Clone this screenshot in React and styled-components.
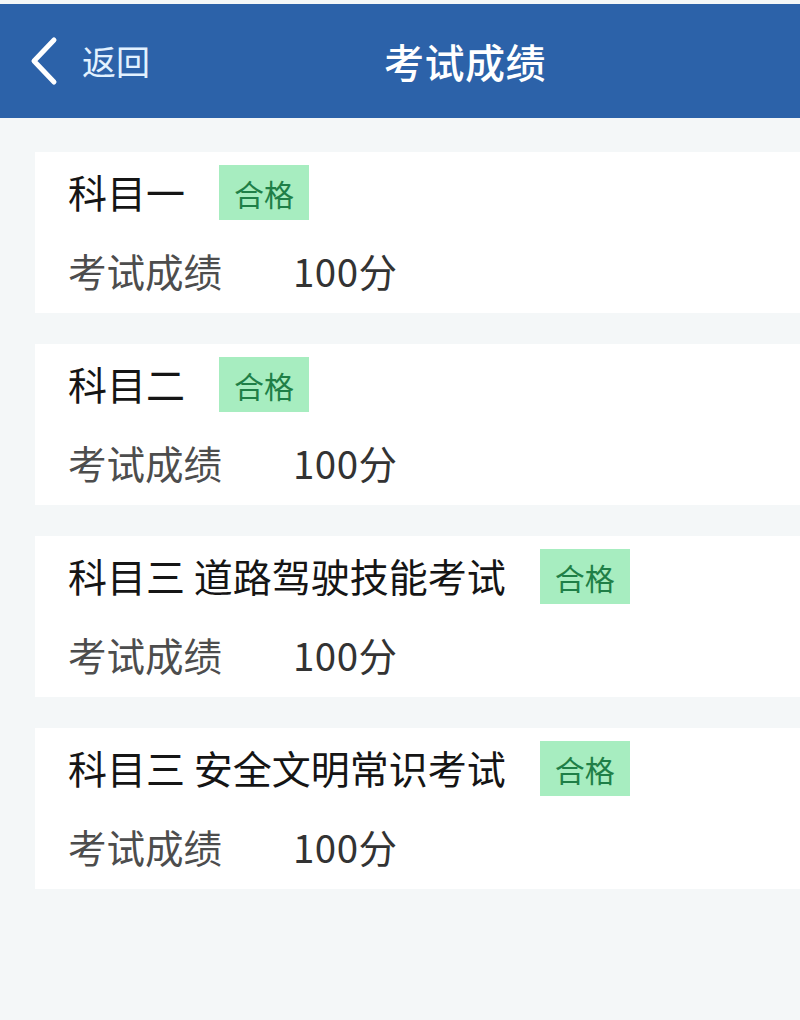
import React from "react"
import styled, { createGlobalStyle } from "styled-components"

const GlobalStyle = createGlobalStyle`
  html, body {
    margin: 0;
    padding: 0;
    background: #f4f7f8;
    font-family: "Noto Sans CJK SC", "Noto Sans", sans-serif;
  }
`

const exams = [
  { name: "科目一", score: 100, passed: true },
  { name: "科目二", score: 100, passed: true },
  { name: "科目三 道路驾驶技能考试", score: 100, passed: true },
  { name: "科目三 安全文明常识考试", score: 100, passed: true },
]

const Page = styled.div`
  min-height: 1020px;
  padding-top: 4px;
  background: #f4f7f8;
  box-sizing: border-box;
`

const Header = styled.header`
  height: 114px;
  background: #2c62a9;
  display: flex;
  align-items: center;
  padding-left: 28px;
  box-sizing: border-box;
`

const BackButton = styled.div`
  display: flex;
  align-items: center;
  gap: 22px;
  color: #e2f1ff;
  font-size: 34px;
  line-height: 1;
  cursor: pointer;
`

const Title = styled.h1`
  margin: 0 0 0 234px;
  font-size: 40px;
  font-weight: 500;
  color: #ffffff;
  letter-spacing: 0.5px;
`

const List = styled.div`
  display: flex;
  flex-direction: column;
  gap: 31px;
  padding: 34px 0 0 35px;
`

const Card = styled.div`
  background: #ffffff;
  padding: 13px 0 17px 33px;
  display: flex;
  flex-direction: column;
  gap: 24px;
`

const TitleRow = styled.div`
  display: flex;
  align-items: center;
  gap: 34px;
`

const Name = styled.div`
  font-size: 39px;
  color: #151515;
  line-height: 1;
  padding-bottom: 2px;
`

const Badge = styled.span`
  display: inline-flex;
  align-items: center;
  justify-content: center;
  width: 90px;
  height: 55px;
  background: ${({ passed }) => (passed ? "#a7edc0" : "#f5c2c2")};
  color: ${({ passed }) => (passed ? "#1f7f47" : "#b33a3a")};
  font-size: 30px;
  line-height: 1;
`

const ScoreRow = styled.div`
  display: flex;
  align-items: center;
  height: 52px;
  font-size: 38.5px;
  line-height: 1;
`

const Label = styled.span`
  color: #4d4d4d;
  width: 225px;
`

const Score = styled.span`
  color: #333333;
  letter-spacing: 0.5px;
`

const Chevron = () => (
  <svg width="32" height="50" viewBox="0 0 32 50" fill="none">
    <path
      d="M26 4 L6 25 L26 46"
      stroke="#ffffff"
      strokeWidth="5"
      strokeLinecap="round"
      strokeLinejoin="round"
    />
  </svg>
)

export default function App() {
  return (
    <>
      <GlobalStyle />
      <Page>
        <Header>
          <BackButton>
            <Chevron />
            <span>返回</span>
          </BackButton>
          <Title>考试成绩</Title>
        </Header>
        <List>
          {exams.map(exam => (
            <Card key={exam.name}>
              <TitleRow>
                <Name>{exam.name}</Name>
                <Badge passed={exam.passed}>{exam.passed ? "合格" : "不合格"}</Badge>
              </TitleRow>
              <ScoreRow>
                <Label>考试成绩</Label>
                <Score>{exam.score}分</Score>
              </ScoreRow>
            </Card>
          ))}
        </List>
      </Page>
    </>
  )
}
